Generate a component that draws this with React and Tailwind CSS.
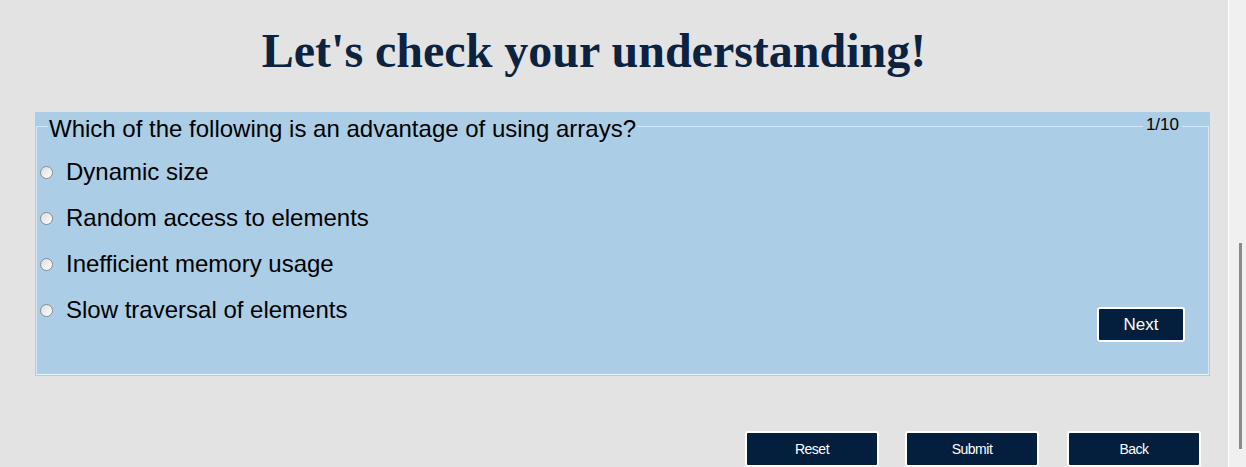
import React from "react";

const options = [
  "Dynamic size",
  "Random access to elements",
  "Inefficient memory usage",
  "Slow traversal of elements",
];

const Radio = () => (
  <span className="w-[13px] h-[13px] rounded-full border border-[#8c8c8c] bg-gradient-to-br from-[#dcdcdc] to-white shrink-0" />
);

const App = () => {
  return (
    <div className="w-[1246px] h-[467px] overflow-hidden bg-[#e3e3e3] flex font-['Liberation_Sans',Arial,sans-serif]">
      <div className="w-[1228px] flex flex-col">
        <h1 className="h-[113px] pt-[23px] pr-[40px] text-center text-[#0b2341] font-['Liberation_Serif',serif] font-bold text-[48px] leading-[56px]">
          Let's check your understanding!
        </h1>

        <div className="ml-[35px] w-[1175px] h-[266px] bg-[#abcde6] pt-[14px] pl-px pr-px">
          <div className="relative h-[249px] border border-[#dbe7f0] border-b-[#eef3f7]">
            <span className="absolute left-[11px] top-[-12px] bg-[#abcde6] px-px text-[24px] leading-[28px] text-black">
              Which of the following is an advantage of using arrays?
            </span>
            <span className="absolute right-[26px] top-[-12px] bg-[#abcde6] px-[3px] text-[17px] leading-[20px] text-black">
              1/10
            </span>

            <div className="flex flex-col pt-[31px] pl-[3px] gap-[18px]">
              {options.map((opt) => (
                <label key={opt} className="flex items-center gap-[13px] h-[28px]">
                  <Radio />
                  <span className="text-[24px] leading-[28px] text-black">{opt}</span>
                </label>
              ))}
            </div>

            <button className="absolute left-[1060px] top-[180px] w-[88px] h-[35px] bg-[#041f3d] border-2 border-white rounded-[3px] text-white text-[17px] leading-none">
              Next
            </button>
          </div>
        </div>

        <div className="flex justify-end pr-[27px] pt-[55px]">
          <button className="w-[134px] h-[36px] bg-[#041f3d] border-2 border-white rounded-[3px] text-white text-[14px] leading-none tracking-[-0.5px]">
            Reset
          </button>
          <button className="ml-[26px] w-[134px] h-[36px] bg-[#041f3d] border-2 border-white rounded-[3px] text-white text-[14px] leading-none tracking-[-0.5px]">
            Submit
          </button>
          <button className="ml-[28px] w-[134px] h-[36px] bg-[#041f3d] border-2 border-white rounded-[3px] text-white text-[14px] leading-none tracking-[-0.5px]">
            Back
          </button>
        </div>
      </div>

      <div className="w-[18px] bg-[#f0f0f0] border-l border-white flex justify-center">
        <div className="mt-[243px] w-[3px] h-[206px] bg-[#8a8a8a] ml-[5px]" />
      </div>
    </div>
  );
};

export default App;
